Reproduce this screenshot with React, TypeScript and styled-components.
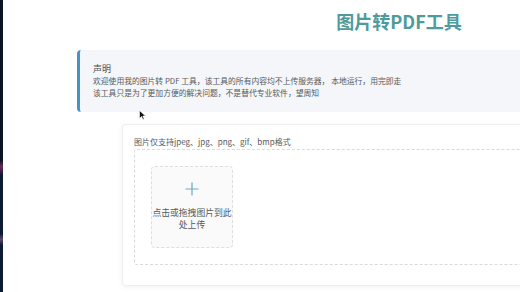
import React from 'react';
import styled, { createGlobalStyle } from 'styled-components';

const GlobalStyle = createGlobalStyle`
    html, body {
        margin: 0;
        padding: 0;
        background: #ffffff;
        font-family: "Noto Sans CJK SC", "Noto Sans", sans-serif;
    }
`;

const Page = styled.div`
    position: relative;
    display: flex;
    width: 520px;
    height: 292px;
    overflow: hidden;
    background: #ffffff;
`;

const SideStrip = styled.div`
    width: 3px;
    flex-shrink: 0;
    background: linear-gradient(#0b1424 0%, #0b1424 55%, #6a2a5a 57%, #0d1a33 60%, #0d1a33 80%, #5a4a6a 82%, #0d1a33 84%, #0d1a33 100%);
`;

const Content = styled.div`
    flex-shrink: 0;
    width: 644px;
    margin-left: 74px;
    display: flex;
    flex-direction: column;
`;

const Title = styled.h1`
    margin: 8px 0 0;
    text-align: center;
    font-size: 18px;
    line-height: 26px;
    font-weight: 700;
    color: #4f9b9c;
`;

const Notice = styled.div`
    margin-top: 16px;
    height: 62px;
    box-sizing: border-box;
    padding: 13px 0 0 13px;
    background: #f4f6f9;
    border-left: 3px solid #4a91c4;
    border-radius: 4px;
    font-size: 7.8px;
    line-height: 12px;
    color: #555a60;
`;

const NoticeTitle = styled.div`
    font-size: 9px;
    color: #4a4e54;
`;

const Card = styled.div`
    margin: 12px 0 0 45px;
    height: 162px;
    box-sizing: border-box;
    padding: 10px 0 0 11px;
    background: #ffffff;
    border: 1px solid #eceef1;
    border-radius: 3px;
    box-shadow: 0 1px 6px rgba(0, 0, 0, 0.05);
`;

const Hint = styled.div`
    font-size: 8px;
    line-height: 13px;
    color: #555a60;
`;

const DropArea = styled.div`
    margin-top: 1px;
    height: 116px;
    box-sizing: border-box;
    padding: 16px 0 0 16px;
    border: 1px dashed #d8dadd;
    border-radius: 3px;
`;

const UploadBox = styled.div`
    width: 82px;
    height: 82px;
    box-sizing: border-box;
    display: flex;
    flex-direction: column;
    align-items: center;
    padding-top: 15px;
    background: #fafafa;
    border: 1px dashed #dcdee2;
    border-radius: 4px;
    font-size: 8.8px;
    line-height: 12px;
    color: #555a60;
    text-align: center;
    white-space: nowrap;
`;

const PlusIcon = styled.svg`
    width: 14px;
    height: 14px;
    margin-bottom: 11px;
`;

const Cursor = styled.svg`
    position: absolute;
    left: 139px;
    top: 110px;
    width: 7px;
    height: 10px;
`;

const App: React.FC = () => (
    <Page>
        <GlobalStyle />
        <SideStrip />
        <Content>
            <Title>图片转PDF工具</Title>
            <Notice>
                <NoticeTitle>声明</NoticeTitle>
                <div>欢迎使用我的图片转 PDF 工具，该工具的所有内容均不上传服务器， 本地运行，用完即走</div>
                <div>该工具只是为了更加方便的解决问题，不是替代专业软件，望周知</div>
            </Notice>
            <Card>
                <Hint>图片仅支持jpeg、jpg、png、gif、bmp格式</Hint>
                <DropArea>
                    <UploadBox>
                        <PlusIcon viewBox="0 0 14 14">
                            <path d="M7 0.5V13.5M0.5 7H13.5" stroke="#6aa9c9" strokeWidth="1.2" fill="none" />
                        </PlusIcon>
                        <div>点击或拖拽图片到此</div>
                        <div>处上传</div>
                    </UploadBox>
                </DropArea>
            </Card>
        </Content>
        <Cursor viewBox="0 0 7 10">
            <path d="M0.5 0.5V8.5L2.5 6.5L4 9.5L5.2 9L3.8 6H6.5Z" fill="#111" stroke="#fff" strokeWidth="0.6" />
        </Cursor>
    </Page>
);

export default App;
